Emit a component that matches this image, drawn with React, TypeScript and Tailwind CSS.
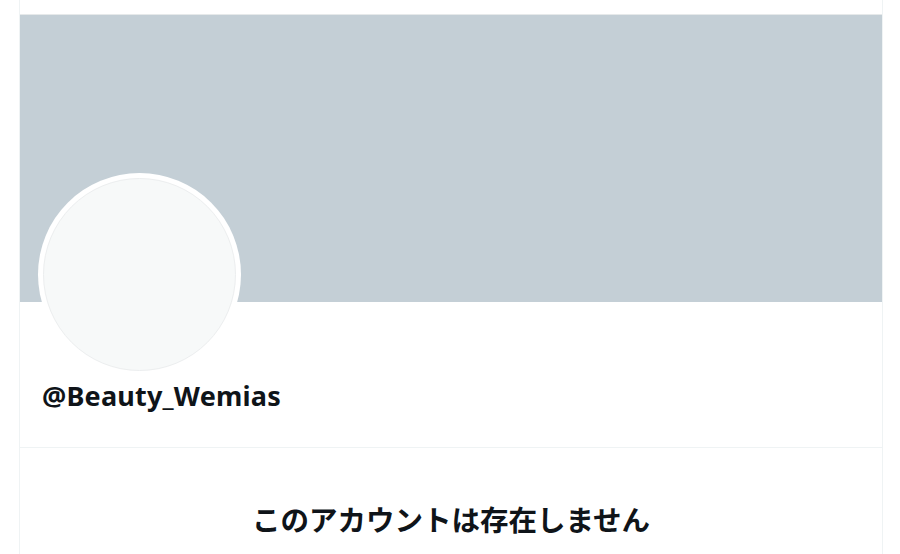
import React from "react";

export default function App() {
  return (
    <div className="w-[900px] h-[554px] overflow-hidden bg-white" style={{ fontFamily: '"Noto Sans", "Noto Sans CJK JP", sans-serif' }}>
      <div className="ml-[19px] w-[864px] h-full border-x border-[#eff3f4] flex flex-col">
        <div className="h-[15px] border-b border-[#e6e9ea] shrink-0" />
        <div className="h-[287px] bg-[#c4cfd6] shrink-0" />
        <div className="px-[18px] shrink-0">
          <div className="-mt-[129px] w-[203px] h-[203px] rounded-full bg-white p-[5px]">
            <div className="w-full h-full rounded-full bg-[#f7f9f9] border border-[#eceeef]" />
          </div>
          <div className="mt-[4px] ml-[4px] text-[27px] leading-[32px] font-bold text-[#0f1419] tracking-[0.2px]">@Beauty_Wemias</div>
        </div>
        <div className="mt-[35px] border-b border-[#eff3f4]" />
        <div className="pt-[51px] text-center text-[28.5px] leading-[40px] font-bold text-[#0f1419]" style={{ fontFamily: '"Noto Sans CJK JP", sans-serif' }}>
          このアカウントは存在しません
        </div>
      </div>
    </div>
  );
}
